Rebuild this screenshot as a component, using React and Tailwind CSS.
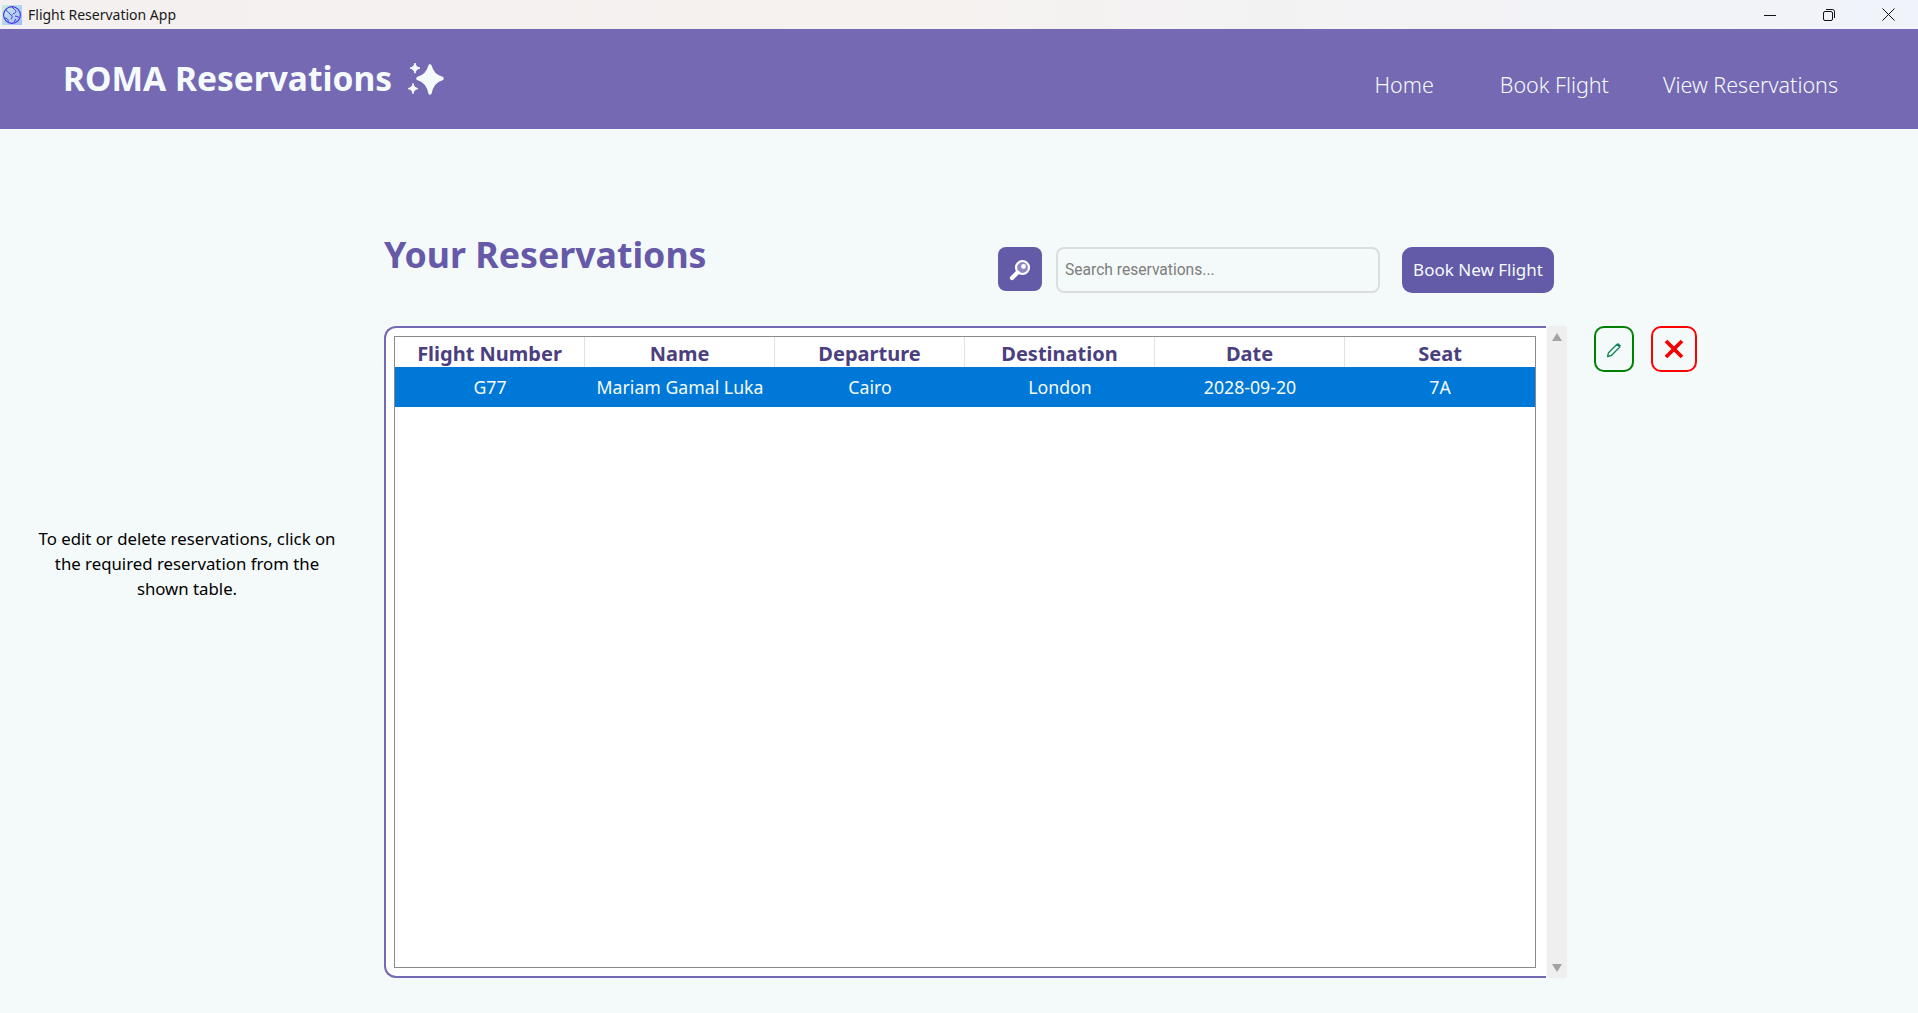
const segoe = "font-['Noto_Sans','Open_Sans',sans-serif]";

function AppIcon() {
  return (
    <svg width="20" height="20" viewBox="0 0 20 20" className="shrink-0">
      <defs>
        <linearGradient id="appBg" x1="0" y1="0" x2="1" y2="1">
          <stop offset="0" stopColor="#c8f0dc" />
          <stop offset="1" stopColor="#9dbbff" />
        </linearGradient>
      </defs>
      <rect width="20" height="20" fill="url(#appBg)" />
      <circle cx="10" cy="10" r="8.4" fill="none" stroke="#4a2be0" strokeWidth="1.1" />
      <path d="M4 5.5c3 1 3 3.5 5 4.5s1 3 0 4.5M10 2c1 2 4 2.500 4 4.500s-3 1.500-3.500 3M13 11c1.500.5 3 .5 4 1.500M3 13c1.500 0 3 1 3.500 3.500M14 14l-2 3" fill="none" stroke="#4a2be0" strokeWidth="1" />
    </svg>
  );
}

function Sparkle() {
  return (
    <svg width="37" height="32" viewBox="0 0 37 32" fill="#f5fbfd" className="shrink-0">
      <path d="M23 3c1.500 6.500 5 10.500 12 12.500C28 17.500 24.500 22 23 30c-1.500-8-5-12.500-12-14.500C18 13.500 21.500 9.500 23 3z" stroke="#f5fbfd" strokeWidth="3.400" strokeLinejoin="round" />
      <path d="M8 0c.7 3 2 4.400 5 5.100-3 .7-4.300 2.100-5 5.100-.7-3-2-4.400-5-5.100 3-.7 4.300-2.100 5-5.100z" stroke="#f5fbfd" strokeWidth="1" strokeLinejoin="round" />
      <path d="M6 20.500c.7 3 2 4.400 5 5.100-3 .7-4.300 2.100-5 5.100-.7-3-2-4.400-5-5.100 3-.7 4.300-2.100 5-5.100z" stroke="#f5fbfd" strokeWidth="1" strokeLinejoin="round" />
    </svg>
  );
}

function WindowControls() {
  return (
    <div className="flex items-center h-full">
      <svg width="12" height="12" viewBox="0 0 12 12" className="mr-[47px]">
        <path d="M0 6.500h12" stroke="#111" strokeWidth="1" />
      </svg>
      <svg width="12" height="12" viewBox="0 0 12 12" className="mr-[47px]">
        <rect x=".5" y="2.500" width="9" height="9" rx="1.500" fill="none" stroke="#111" />
        <path d="M3 .5h6.500a2 2 0 0 1 2 2V9" fill="none" stroke="#111" />
      </svg>
      <svg width="13" height="13" viewBox="0 0 13 13" className="mr-[23px]">
        <path d="M.5.5l12 12M12.500.5l-12 12" stroke="#111" strokeWidth="1" />
      </svg>
    </div>
  );
}

function SearchIcon() {
  return (
    <svg width="22" height="22" viewBox="0 0 22 22" className="mt-[1px]">
      <circle cx="13.500" cy="8.500" r="6.500" fill="#8f86c6" stroke="#fff" strokeWidth="2.200" />
      <circle cx="14.500" cy="7.500" r="2.400" fill="#fff" />
      <path d="M8.500 13.500L3 19" stroke="#fff" strokeWidth="4.200" strokeLinecap="round" />
    </svg>
  );
}

function PencilIcon() {
  return (
    <svg width="16" height="16" viewBox="0 0 16 16" className="mt-[1px]">
      <path d="M1.500 14.500l1-3.800L11 2.200l2.800 2.800-8.500 8.500z" fill="none" stroke="#0f8a50" strokeWidth="1.300" strokeLinejoin="round" />
      <path d="M10.800 2.400l1.400-1.400 2.800 2.800-1.400 1.400z" fill="#0b7f6a" />
    </svg>
  );
}

function CloseIcon() {
  return (
    <svg width="20" height="20" viewBox="0 0 20 20">
      <path d="M2 2l16 16M18 2L2 18" stroke="#f50000" strokeWidth="3.800" />
    </svg>
  );
}

const columns = [
  ["Flight Number", "G77"],
  ["Name", "Mariam Gamal Luka"],
  ["Departure", "Cairo"],
  ["Destination", "London"],
  ["Date", "2028-09-20"],
  ["Seat", "7A"],
];

function App() {
  return (
    <div className={`w-[1918px] h-[1013px] overflow-hidden flex flex-col bg-[#f4f9f9] ${segoe}`}>
      <div className="h-[29px] shrink-0 flex items-center justify-between pl-[2px] bg-gradient-to-r from-[#f3f0ef] via-[#f5f2f0] to-[#f0f3fa]">
        <div className="flex items-center gap-[6px]">
          <AppIcon />
          <span className="text-[14px] leading-none text-[#1a1a1a]">Flight Reservation App</span>
        </div>
        <WindowControls />
      </div>

      <header className="h-[100px] shrink-0 bg-[#7569b3] flex justify-between pl-[63px] pr-[80px] text-[#f5fbfd]">
        <div className="flex items-center gap-[15px] pb-[1px]">
          <h1 className="text-[33.500px] leading-none font-bold">ROMA Reservations</h1>
          <Sparkle />
        </div>
        <nav className="flex items-center pt-[12px] text-[21.500px] font-light leading-none">
          <span className="mr-[66px]">Home</span>
          <span className="mr-[54px]">Book Flight</span>
          <span>View Reservations</span>
        </nav>
      </header>

      <main className="flex-1 flex">
        <aside className="w-[384px] shrink-0 pt-[397px] pl-[32px] pr-[42px]">
          <p className="text-[16.800px] leading-[25px] text-center text-black">
            To edit or delete reservations, click on the required reservation from the shown table.
          </p>
        </aside>

        <div className="flex flex-col pt-[106px]">
          <div className="flex w-[1170px] h-[91px] items-start">
            <h2 className="flex-1 text-[35.700px] leading-none font-bold text-[#6559a8] pt-[2px]">Your Reservations</h2>
            <button className="w-[44px] h-[44px] mt-[12px] rounded-[8px] bg-[#635aa8] flex items-center justify-center">
              <SearchIcon />
            </button>
            <input
              readOnly
              placeholder="Search reservations..."
              className="w-[324px] h-[46px] mt-[12px] ml-[14px] rounded-[8px] border-2 border-[#dadee1] bg-[#f4f9f9] px-[7px] text-[15.600px] font-['Roboto',sans-serif] placeholder:text-[#7d7d7d] outline-none"
            />
            <button className="w-[152px] h-[46px] mt-[12px] ml-[22px] rounded-[10px] bg-[#635aa8] text-[#f5fbfd] text-[17px]">
              Book New Flight
            </button>
          </div>

          <div className="flex items-start">
            <div className="w-[1162px] h-[652px] bg-white border-2 border-r-0 border-[#7569b3] rounded-l-[12px] pt-[8px] pb-[8px] pl-[8px] pr-[10px]">
              <div className="h-full border border-[#8a8a8e] bg-white">
                <div className="grid grid-cols-6 h-[30px]">
                  {columns.map(([head], i) => (
                    <div
                      key={head}
                      className={`flex items-center justify-center pt-[3px] text-[20px] leading-none font-bold text-[#4b3f80] ${i < 5 ? "border-r border-[#e2e2e2]" : ""}`}
                    >
                      {head}
                    </div>
                  ))}
                </div>
                <div className="grid grid-cols-6 h-[40px] bg-[#0078d7]">
                  {columns.map(([head, cell]) => (
                    <div key={head} className="flex items-center justify-center pt-[2px] text-[17.700px] leading-none text-[#f5fbfd]">
                      {cell}
                    </div>
                  ))}
                </div>
              </div>
            </div>

            <div className="w-[20px] h-[652px] ml-[1px] bg-[#efefef] flex flex-col items-center justify-between pt-[7px] pb-[6px]">
              <div className="w-0 h-0 border-x-[5px] border-x-transparent border-b-[8px] border-b-[#a3a3a3]" />
              <div className="w-0 h-0 border-x-[5px] border-x-transparent border-t-[8px] border-t-[#a3a3a3]" />
            </div>

            <div className="flex ml-[27px] gap-[17px]">
              <button className="w-[40px] h-[46px] rounded-[10px] border-2 border-[#008000] flex items-center justify-center">
                <PencilIcon />
              </button>
              <button className="w-[46px] h-[46px] rounded-[10px] border-2 border-[#ff0000] flex items-center justify-center">
                <CloseIcon />
              </button>
            </div>
          </div>
        </div>
      </main>
    </div>
  );
}

export default App;
